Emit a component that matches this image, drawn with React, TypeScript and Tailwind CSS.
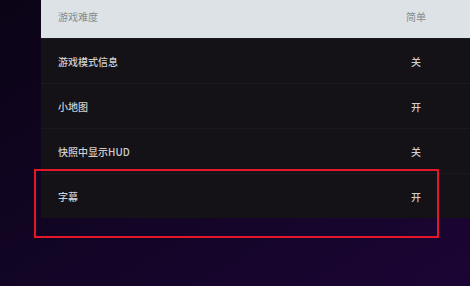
const rows = [
  { label: '游戏难度', value: '简单' },
  { label: '游戏模式信息', value: '关' },
  { label: '小地图', value: '开' },
  { label: '快照中显示HUD', value: '关' },
  { label: '字幕', value: '开' },
];

export default function App() {
  return (
    <div
      className="relative h-[286px] w-[470px] overflow-hidden bg-gradient-to-br from-[#0b0416] via-[#120525] to-[#1c0535]"
      style={{ fontFamily: '"Noto Sans CJK SC", "Noto Sans", sans-serif' }}
    >
      <div className="-mt-[6px] ml-[41px] bg-[#141217]">
        {rows.map((r, i) => (
          <div
            key={r.label}
            className={
              i === 0
                ? 'flex h-[44px] items-center justify-between bg-[#dce2e5] pl-[17px] pr-[42px] text-[10px] text-[#858a8e]'
                : 'flex h-[45px] items-center justify-between border-t border-[#1b181f] pl-[17px] pr-[42px] text-[10px] font-medium text-[#cfcfd2]'
            }
          >
            <span className="whitespace-nowrap">{r.label}</span>
            <span className="w-[24px] whitespace-nowrap text-center">{r.value}</span>
          </div>
        ))}
      </div>
      <div className="pointer-events-none absolute left-[34px] top-[169px] h-[69px] w-[405px] border-2 border-[#e3162a]" />
    </div>
  );
}
